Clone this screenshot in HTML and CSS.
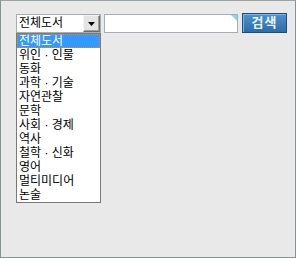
FILE: index.html
```html
<!DOCTYPE html>
<html lang="ko">
<head>
    <meta charset="UTF-8">
    <title>도서 검색</title>
    <link rel="stylesheet" href="styles.css">
</head>
<body>
    <div class="frame">
        <div class="search-row">
            <div class="combo">
                <div class="combo-box">
                    <span class="combo-value">전체도서</span>
                    <span class="combo-btn">
                        <svg width="7" height="4" viewBox="0 0 7 4"><path d="M0 0H7L3.5 4Z" fill="#000"/></svg>
                    </span>
                </div>
                <ul class="combo-list">
                    <li class="selected">전체도서</li>
                    <li>위인 · 인물</li>
                    <li>동화</li>
                    <li>과학 · 기술</li>
                    <li>자연관찰</li>
                    <li>문학</li>
                    <li>사회 · 경제</li>
                    <li>역사</li>
                    <li>철학 · 신화</li>
                    <li>영어</li>
                    <li>멀티미디어</li>
                    <li>논술</li>
                </ul>
            </div>
            <div class="query"></div>
            <button class="search-btn">검색</button>
        </div>
    </div>
</body>
</html>
```

FILE: styles.css
```css
body {
    margin: 0;
    font-family: "Liberation Sans", "Noto Sans CJK KR", sans-serif;
}

.frame {
    box-sizing: border-box;
    width: 296px;
    height: 258px;
    border: 1px solid #869394;
    border-top-color: #9aa4a5;
    background: #e9e9e9;
    padding: 13px 0 0 15px;
}

.search-row {
    display: flex;
    align-items: flex-start;
}

.combo {
    position: relative;
    width: 85px;
}

.combo-box {
    box-sizing: border-box;
    height: 19px;
    display: flex;
    background: white;
    border: 1px solid #a5acb2;
}

.combo-value {
    flex: 1;
    font-size: 12px;
    line-height: 17px;
    padding-left: 2px;
    color: #000;
}

.combo-btn {
    box-sizing: border-box;
    width: 17px;
    height: 17px;
    display: flex;
    align-items: center;
    justify-content: center;
    background: #e4e4e4;
    border: 1px solid #6b6b6b;
    border-top-color: #f2f2f2;
    border-left-color: #f2f2f2;
    box-shadow: inset -1px -1px 0 #9e9e9e;
}

.combo-list {
    position: absolute;
    top: 19px;
    left: 0;
    box-sizing: border-box;
    width: 85px;
    margin: 0;
    padding: 0;
    list-style: none;
    background: white;
    border: 1px solid #7a7a7a;
}

.combo-list li {
    height: 14px;
    font-size: 12px;
    line-height: 14px;
    padding-left: 2px;
    color: #000;
    white-space: nowrap;
}

.combo-list li.selected {
    background: #3399ff;
    color: white;
    outline: 1px dotted #e08a2c;
    outline-offset: -1px;
}

.query {
    position: relative;
    box-sizing: border-box;
    width: 134px;
    height: 19px;
    margin-left: 3px;
    background: white;
    border: 1px solid #a5acb2;
}

.query::after {
    content: "";
    position: absolute;
    top: 0;
    right: 0;
    border-top: 6px solid #8fd3ef;
    border-left: 6px solid transparent;
}

.search-btn {
    box-sizing: border-box;
    width: 45px;
    height: 20px;
    margin: -1px 0 0 4px;
    padding: 0;
    font-family: "Liberation Sans", "Noto Sans CJK KR", sans-serif;
    font-size: 13px;
    font-weight: bold;
    line-height: 16px;
    letter-spacing: 1px;
    color: #e8f3ff;
    background: linear-gradient(#4f92cc, #2d6ca8);
    border: 1px solid #1c4c7c;
    box-shadow: inset 1px 1px 0 #7fb5e2;
}
```
